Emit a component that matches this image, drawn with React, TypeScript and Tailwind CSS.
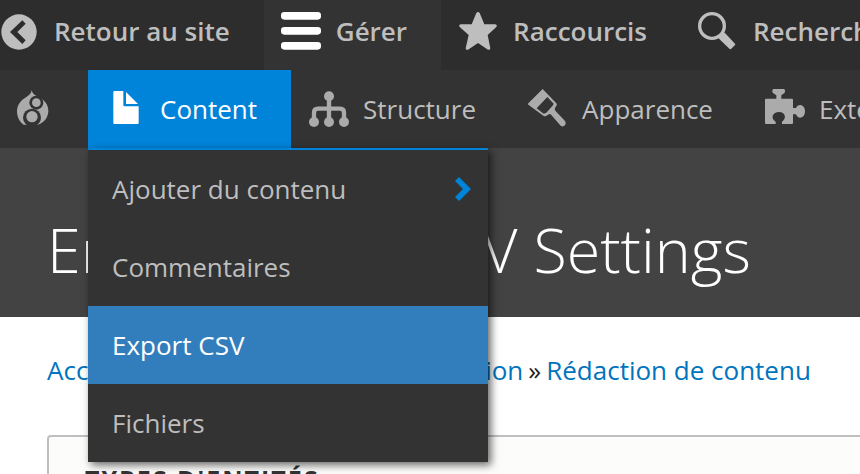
import type { ReactNode } from "react";

type NavItem = {
  label: string;
  icon: ReactNode;
  active?: boolean;
};

const tabs: NavItem[] = [
  {
    label: "Gérer",
    active: true,
    icon: (
      <svg viewBox="93 30 120 120" className="size-10 shrink-0 fill-white" aria-hidden="true">
        <rect x="93" y="33" width="120" height="23" rx="10" />
        <rect x="93" y="78" width="120" height="23" rx="10" />
        <rect x="93" y="123" width="120" height="23" rx="10" />
      </svg>
    ),
  },
  {
    label: "Raccourcis",
    icon: (
      <svg viewBox="624 30 120 120" className="size-10 shrink-0 fill-[#bebebe]" aria-hidden="true">
        <path d="M679 36q5-6 10 0l14 34h33q7 2 3 8l-26 24 8 40q-1 6-7 4l-30-20-30 20q-7 2-7-4l9-40-27-24q-4-6 3-8h33z" />
      </svg>
    ),
  },
  {
    label: "Recherche",
    icon: (
      <svg viewBox="174 30 120 120" className="size-10 shrink-0" aria-hidden="true">
        <circle cx="216" cy="75" r="37" fill="none" stroke="#bebebe" strokeWidth="10" />
        <path d="M237 108l13-13q3-1 5 1l30 32q2 2 0 4l-12 12q-2 1-4 0l-32-31q-2-3 0-5z" fill="#bebebe" />
      </svg>
    ),
  },
];

const trayItems: NavItem[] = [
  {
    label: "Structure",
    icon: (
      <svg viewBox="174 267 120 120" className="size-10 shrink-0 overflow-visible" fill="#ababab" aria-hidden="true">
        <path d="M192 364v-26q0-12 12-12h66q12 0 12 12v26M237 290v74" fill="none" stroke="#ababab" strokeWidth="13" />
        <circle cx="237" cy="289" r="15" />
        <circle cx="192" cy="366" r="15" />
        <circle cx="237" cy="366" r="15" />
        <circle cx="282" cy="366" r="15" />
      </svg>
    ),
  },
  {
    label: "Apparence",
    icon: (
      <svg viewBox="231 267 120 120" className="size-10 shrink-0" fill="#ababab" aria-hidden="true">
        <path
          fillRule="evenodd"
          d="M278 267l41 43q3 3 1 6l-5 8q-2 4 1 8l29 31q5 7 0 13-7 6-13 1l-28-32q-3-4-7-2l-9 5q-4 2-8-1l-45-33q-2-2 0-4zM292 291l-32 34 21 16 8-3 20-22 2-5z"
        />
      </svg>
    ),
  },
  {
    label: "Extension",
    icon: (
      <svg viewBox="372 267 120 120" className="size-10 shrink-0 overflow-visible" fill="#ababab" aria-hidden="true">
        <path d="M399 267h34q4 6 1 11l-10 8v10h32q3 0 3 3v25h9c5-15 27-12 27 10s-22 25-27 9h-9v26q0 3-3 3h-30v-7c15-10 10-29-9-29s-27 19-10 29v7h-29q-3 0-3-3v-70q0-3 3-3h31v-10l-11-8q-3-5 1-11z" />
      </svg>
    ),
  },
];

const contentLinks = [
  { label: "Ajouter du contenu", hasChildren: true },
  { label: "Commentaires" },
  { label: "Export CSV", highlighted: true },
  { label: "Fichiers" },
];

const breadcrumb = ["Accueil", "Administration", "Configuration", "Rédaction de contenu"];

function BackIcon() {
  return (
    <svg viewBox="0 30 120 120" className="size-10 shrink-0" aria-hidden="true">
      <circle cx="57" cy="93" r="53" fill="#bebebe" />
      <path d="M67 58l10 10-25 25 25 25-10 11-37-36z" fill="#2d2d2d" />
    </svg>
  );
}

function DrupalIcon() {
  return (
    <svg viewBox="39 267 120 120" className="size-10" fill="#ababab" aria-hidden="true">
      <path d="M95 269c2 18 20 18 32 29 12 10 18 21 18 34 0 19-12 36-31 42H71c-12-8-20-23-20-40 0-28 21-38 33-47 7-5 11-11 11-18z" />
      <circle cx="109" cy="308" r="21" fill="#333" />
      <circle cx="96" cy="353" r="27" fill="#333" />
      <circle cx="109" cy="308" r="13" />
      <circle cx="96" cy="350" r="17" />
    </svg>
  );
}

function ContentMenu() {
  return (
    <div className="relative">
      <a href="#content" className="flex h-full items-center bg-[#0084da] pr-[34px] pl-[17px] text-white">
        <svg viewBox="315 267 120 120" className="mr-[15px] size-10 shrink-0 fill-white" aria-hidden="true">
          <path d="M343 273h27v42q0 4 4 4h42v50q0 3-3 3h-70q-3 0-3-3v-93q0-3 3-3z" />
          <path d="M378 276l36 36h-36z" />
        </svg>
        Content
      </a>
      <ul className="absolute top-full left-0 z-10 w-[400px] border-t-2 border-[#0084da] bg-[#333] shadow-[3px_3px_8px_rgba(0,0,0,0.6)]">
        {contentLinks.map((link) => (
          <li key={link.label}>
            <a
              href="#menu"
              className={`flex h-[78px] items-center justify-between pr-4 pl-6 ${
                link.highlighted ? "bg-[#327ebd] text-white" : ""
              }`}
            >
              {link.label}
              {link.hasChildren ? (
                <svg viewBox="0 0 18 24" className="h-6 w-[18px]" fill="#0084da" aria-hidden="true">
                  <path d="M5 0l12 12L5 24l-4-4 8-8-8-8z" />
                </svg>
              ) : null}
            </a>
          </li>
        ))}
      </ul>
    </div>
  );
}

export default function App() {
  return (
    <div className="min-h-screen overflow-hidden bg-white font-['Open_Sans',sans-serif] text-[26px] leading-9 text-[#bebebe]">
      <nav aria-label="Barre d'outils" className="flex h-[70px] bg-[#2d2d2d] font-semibold whitespace-nowrap">
        <a href="#site" className="flex shrink-0 items-center gap-[14px] pr-[34px] pb-2">
          <BackIcon />
          Retour au site
        </a>
        {tabs.map((tab) => (
          <a
            key={tab.label}
            href="#tab"
            className={`flex shrink-0 items-center gap-[15px] pr-[34px] pb-2 pl-[17px] ${
              tab.active ? "bg-[#333]" : ""
            }`}
          >
            {tab.icon}
            {tab.label}
          </a>
        ))}
      </nav>

      <nav aria-label="Administration" className="flex h-[78px] bg-[#333] whitespace-nowrap">
        <a href="#home" aria-label="Accueil" className="flex w-[88px] shrink-0 items-center pl-[13px]">
          <DrupalIcon />
        </a>
        <ContentMenu />
        {trayItems.map((item) => (
          <a key={item.label} href="#tray" className="flex shrink-0 items-center gap-[15px] pr-[34px] pl-[17px]">
            {item.icon}
            {item.label}
          </a>
        ))}
      </nav>

      <header className="bg-[#434343] px-[47px] pt-[62px] pb-[27px]">
        <h1 className="text-[61px] leading-[80px] font-light whitespace-nowrap text-white">
          Entity Export CSV Settings
        </h1>
      </header>

      <main className="pt-[35px] pl-[47px]">
        <nav aria-label="Fil d'Ariane">
          <ol className="flex whitespace-nowrap text-[#222]">
            {breadcrumb.map((crumb, index) => (
              <li key={crumb}>
                {index > 0 ? <span className="mx-[5px]">»</span> : null}
                <a href="#crumb" className="text-[#0074bd]">
                  {crumb}
                </a>
              </li>
            ))}
          </ol>
        </nav>

        <section className="mt-[47px] -mr-2 rounded-sm border-2 border-[#bfbfbf] bg-[#fcfcfa] px-9 pt-6">
          <h2 className="text-[25px] font-bold tracking-[2px] text-[#333] uppercase">Types d'entités</h2>
        </section>
      </main>
    </div>
  );
}
